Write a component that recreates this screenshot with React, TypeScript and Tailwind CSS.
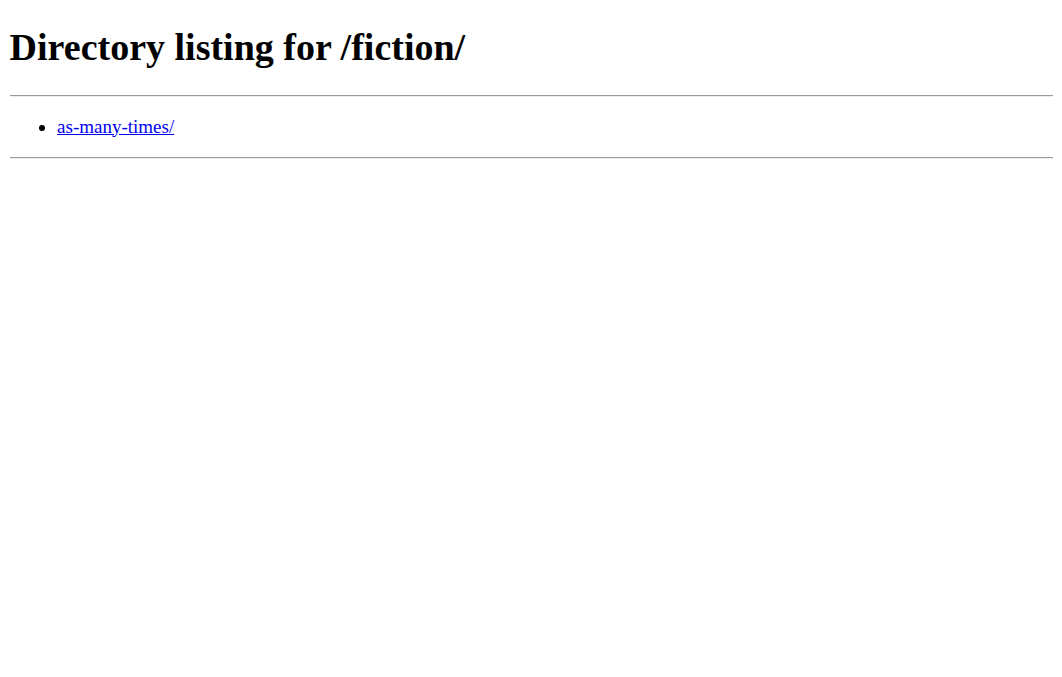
export default function App() {
  return (
    <div className="min-h-screen bg-white pl-[9.6px] pr-[9px] pt-[24.5px] font-['Liberation_Serif',serif] text-black">
      <h1 className="text-[38px] font-bold leading-[44px]">Directory listing for /fiction/</h1>
      <hr className="mt-[26px] border-t-[1.2px] border-b-[1.2px] border-t-[#9a9a9a] border-b-[#eeeeee]" />
      <ul className="mt-[19px] mb-[20px] list-disc pl-[47.5px] text-[19px] leading-[21.5px]">
        <li>
          <a href="as-many-times/" className="text-[#0000ee] underline">
            as-many-times/
          </a>
        </li>
      </ul>
      <hr className="border-t-[1.2px] border-b-[1.2px] border-t-[#9a9a9a] border-b-[#eeeeee]" />
    </div>
  );
}
